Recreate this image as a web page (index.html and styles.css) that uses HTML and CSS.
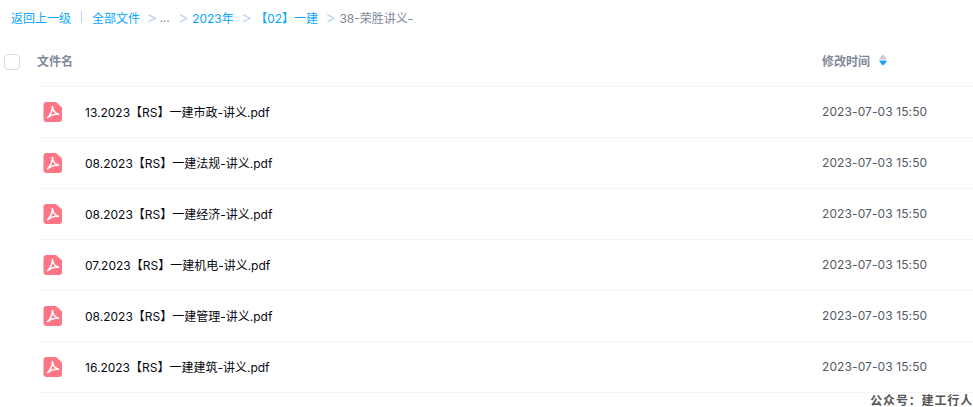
FILE: index.html
```html
<!DOCTYPE html>
<html lang="zh-CN">
<head>
    <meta charset="UTF-8">
    <meta name="viewport" content="width=device-width, initial-scale=1.0">
    <title>全部文件</title>
    <link rel="stylesheet" href="styles.css">
</head>
<body>

<div class="crumbs">
    <a class="back">返回上一级</a>
    <span class="pipe"></span>
    <a>全部文件</a>
    <span class="sep first">&gt;</span>
    <span class="dots">...</span>
    <span class="sep">&gt;</span>
    <a>2023年</a>
    <span class="sep">&gt;</span>
    <a>【02】一建</a>
    <span class="sep">&gt;</span>
    <span class="current">38-荣胜讲义-</span>
</div>

<div class="list-head">
    <span class="check"></span>
    <div class="head-cols">
        <span class="col-name">文件名</span>
        <span class="col-time">修改时间
            <svg class="sort" width="8" height="12" viewBox="0 0 8 12">
                <path d="M4 0.5 Q4.5 0.5 7.5 4.5 Q8 5.5 7 5.5 H1 Q0 5.5 0.5 4.5 Q3.5 0.5 4 0.5 Z" fill="#c6cfdc"/>
                <path d="M4 11.5 Q4.5 11.5 7.5 7.5 Q8 6.5 7 6.5 H1 Q0 6.5 0.5 7.5 Q3.5 11.5 4 11.5 Z" fill="#1e9dff"/>
            </svg>
        </span>
    </div>
</div>

<div class="rows">
    <div class="row">
        <svg class="pdf" width="20" height="22" viewBox="0 0 20 22"><use href="#pdf-icon"/></svg>
        <span class="name">13.2023【RS】一建市政-讲义.pdf</span>
        <span class="time">2023-07-03 15:50</span>
    </div>
    <div class="row">
        <svg class="pdf" width="20" height="22" viewBox="0 0 20 22"><use href="#pdf-icon"/></svg>
        <span class="name">08.2023【RS】一建法规-讲义.pdf</span>
        <span class="time">2023-07-03 15:50</span>
    </div>
    <div class="row">
        <svg class="pdf" width="20" height="22" viewBox="0 0 20 22"><use href="#pdf-icon"/></svg>
        <span class="name">08.2023【RS】一建经济-讲义.pdf</span>
        <span class="time">2023-07-03 15:50</span>
    </div>
    <div class="row">
        <svg class="pdf" width="20" height="22" viewBox="0 0 20 22"><use href="#pdf-icon"/></svg>
        <span class="name">07.2023【RS】一建机电-讲义.pdf</span>
        <span class="time">2023-07-03 15:50</span>
    </div>
    <div class="row">
        <svg class="pdf" width="20" height="22" viewBox="0 0 20 22"><use href="#pdf-icon"/></svg>
        <span class="name">08.2023【RS】一建管理-讲义.pdf</span>
        <span class="time">2023-07-03 15:50</span>
    </div>
    <div class="row">
        <svg class="pdf" width="20" height="22" viewBox="0 0 20 22"><use href="#pdf-icon"/></svg>
        <span class="name">16.2023【RS】一建建筑-讲义.pdf</span>
        <span class="time">2023-07-03 15:50</span>
    </div>
</div>

<div class="watermark">公众号：建工行人</div>

<svg class="defs" width="0" height="0">
    <defs>
        <g id="pdf-icon">
            <path d="M3.5 1 H13 L19 6.5 V18 A3 3 0 0 1 16 21 H3.5 A3 3 0 0 1 0.5 18 V4 A3 3 0 0 1 3.5 1 Z" fill="#ff7585"/>
            <path d="M9.5 5.5 C9.8 9.5 11.5 12 15.5 13.3 M15.5 13.3 C11.5 12.8 8 13.8 4.5 16.8 M4.5 16.8 C7.5 13.8 9.3 10 9.5 5.5" fill="none" stroke="#fff" stroke-width="1.5" stroke-linejoin="round" stroke-linecap="round"/>
        </g>
    </defs>
</svg>

</body>
</html>
```

FILE: styles.css
```css
* {
    box-sizing: border-box;
}
html, body {
    height: 407px;
    overflow: hidden;
}
body {
    position: relative;
    margin: 0;
    background-color: #fff;
    font-family: Inter, "Noto Sans CJK SC", sans-serif;
    font-size: 12px;
    color: #06080f;
}
.crumbs {
    display: flex;
    align-items: center;
    height: 36px;
    padding-left: 11px;
    padding-bottom: 2px;
    color: #06a7ff;
}
.pipe {
    width: 1px;
    height: 12px;
    margin: 0 10px;
    background-color: #b9d3f2;
}
.sep {
    margin: 0 3.4px 0 7.4px;
    font-size: 16px;
    line-height: 16px;
    color: #c3d5ee;
}
.sep.first {
    margin: 0 2.4px 0 6.4px;
}
.dots {
    margin-right: 1px;
    color: #818999;
}
.current {
    color: #818999;
}
.list-head {
    display: flex;
    align-items: center;
    height: 51px;
    padding-left: 4px;
}
.check {
    width: 16px;
    height: 16px;
    border: 1px solid #d8dbe6;
    border-radius: 4px;
}
.head-cols {
    flex: 1;
    display: flex;
    align-items: center;
    height: 100%;
    margin-left: 17px;
    padding-bottom: 2px;
    border-bottom: 1px solid #f3f4f6;
    font-weight: 700;
    color: #818999;
}
.col-name {
    width: 785px;
}
.col-time {
    display: flex;
    align-items: center;
    gap: 9px;
}
.row {
    display: flex;
    align-items: center;
    height: 51px;
    padding-bottom: 2px;
    margin-left: 37px;
    border-bottom: 1px solid #f3f4f6;
}
.pdf {
    margin-left: 6px;
    margin-top: 2px;
    flex-shrink: 0;
}
.name {
    width: 737px;
    margin-left: 22px;
}
.time {
    letter-spacing: 0.1px;
    color: #545b66;
}
.watermark {
    position: absolute;
    right: 0;
    top: 393px;
    line-height: 16px;
    font-weight: 700;
    letter-spacing: 0.85px;
    color: #555;
    background: #fff;
}
.defs {
    position: absolute;
}
```
